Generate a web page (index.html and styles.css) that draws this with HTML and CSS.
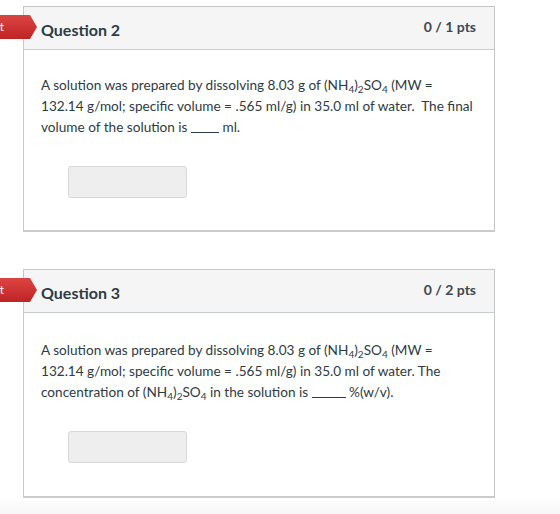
FILE: index.html
```html
<!DOCTYPE html>
<html>
<head>
<meta charset="utf-8">
<link rel="stylesheet" href="styles.css">
</head>
<body>
<div class="page">
  <div class="question">
    <div class="badge"><span class="badge-text">Incorrect</span></div>
    <div class="q-header">
      <span class="q-title">Question 2</span>
      <span class="q-points">0 / 1 pts</span>
    </div>
    <div class="q-body">
      <p class="q-text">A solution was prepared by dissolving 8.03 g of (NH<sub>4</sub>)<sub>2</sub>SO<sub>4</sub> (MW = 132.14 g/mol; specific volume = .565 ml/g) in 35.0 ml of water.&nbsp; The final volume of the solution is <span class="blank blank-short"></span> ml.</p>
      <div class="answer-box"></div>
    </div>
  </div>
  <div class="question question-tall">
    <div class="badge"><span class="badge-text">Incorrect</span></div>
    <div class="q-header">
      <span class="q-title">Question 3</span>
      <span class="q-points">0 / 2 pts</span>
    </div>
    <div class="q-body">
      <p class="q-text">A solution was prepared by dissolving 8.03 g of (NH<sub>4</sub>)<sub>2</sub>SO<sub>4</sub> (MW = 132.14 g/mol; specific volume = .565 ml/g) in 35.0 ml of water. The concentration of (NH<sub>4</sub>)<sub>2</sub>SO<sub>4</sub> in the solution is <span class="blank blank-long"></span> %(w/v).</p>
      <div class="answer-box"></div>
    </div>
  </div>
</div>
<div class="footer"></div>
</body>
</html>
```

FILE: styles.css
```css
html, body {
  margin: 0;
  padding: 0;
  background: #ffffff;
  font-family: Lato, "Open Sans", sans-serif;
  color: #2d3b45;
}

.page {
  padding: 6px 0 0 23px;
  overflow: hidden;
}

.question {
  position: relative;
  width: 472px;
  box-sizing: border-box;
  border: 1px solid #c7c7c7;
  border-bottom: 2px solid #cbcbcb;
  background: #fff;
  margin-bottom: 37px;
}

.question:last-child {
  margin-bottom: 0;
}

.badge {
  position: absolute;
  left: -24px;
  top: 8px;
  width: 30px;
  height: 24px;
  background: linear-gradient(#dc4444, #bf2424);
}

.badge::after {
  content: "";
  position: absolute;
  left: 30px;
  top: 0;
  width: 7px;
  height: 24px;
  background: linear-gradient(#dc4444, #bf2424);
  clip-path: polygon(0 0, 100% 50%, 0 100%);
}

.badge-text {
  position: absolute;
  right: 26px;
  top: 0;
  color: #fff;
  font-size: 12px;
  line-height: 24px;
  white-space: nowrap;
}

.q-header {
  display: flex;
  justify-content: space-between;
  align-items: flex-start;
  height: 42px;
  padding: 0 18px 0 17px;
  background: #f5f5f5;
  border-bottom: 1px solid #c7cdd1;
}

.q-title {
  margin-top: 13px;
  font-size: 16px;
  line-height: 20px;
  font-weight: 700;
  color: #2d3b45;
}

.q-points {
  margin-top: 10px;
  font-size: 14px;
  line-height: 20px;
  font-weight: 700;
  color: #3d4850;
}

.q-body {
  padding: 25px 17px 32px 17px;
}

.question-tall .q-body {
  padding-top: 27px;
  padding-bottom: 33px;
}

.q-text {
  margin: 0;
  font-size: 13.6px;
  line-height: 21px;
  color: #2d3b45;
}

.q-text sub {
  font-size: 10px;
  line-height: 0;
  vertical-align: -3px;
}

.blank {
  display: inline-block;
  height: 1px;
  border-bottom: 1px solid #2d3b45;
  vertical-align: -1px;
}

.blank-short {
  width: 28px;
}

.blank-long {
  width: 34px;
}

.answer-box {
  margin: 28px 0 0 27px;
  width: 119px;
  height: 32px;
  box-sizing: border-box;
  background: #eeeeee;
  border: 1px solid #d8d8d8;
  border-radius: 3px;
}

.footer {
  margin-top: 2px;
  height: 17px;
  background: linear-gradient(#fdfdfd, #f5f5f5);
}
```
